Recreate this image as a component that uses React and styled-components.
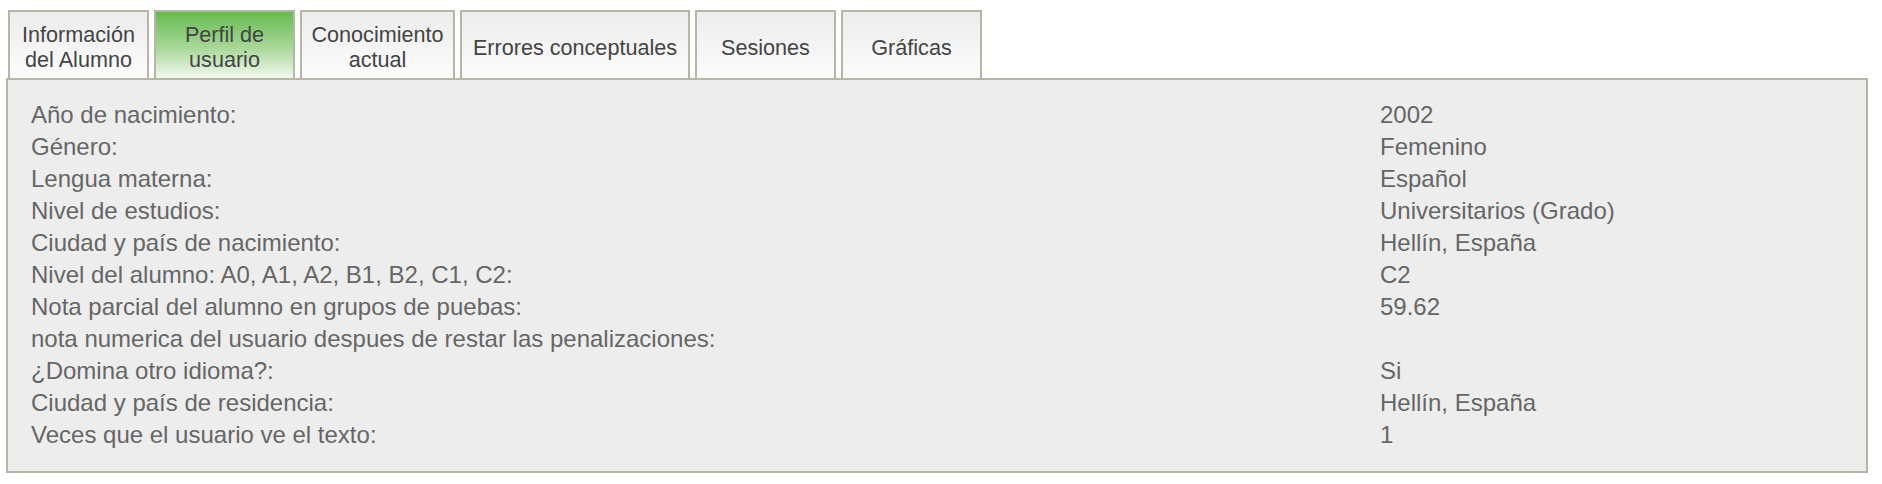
import React from "react";
import styled, { createGlobalStyle } from "styled-components";

const GlobalStyle = createGlobalStyle`
  html, body {
    margin: 0;
    padding: 0;
    background: #ffffff;
  }
  body {
    font-family: "Liberation Sans", Arial, Helvetica, sans-serif;
  }
`;

const tabs = [
  { label: "Información del Alumno", width: 141 },
  { label: "Perfil de usuario", width: 141, active: true },
  { label: "Conocimiento actual", width: 155 },
  { label: "Errores conceptuales", width: 230 },
  { label: "Sesiones", width: 141 },
  { label: "Gráficas", width: 141 },
];

const rows = [
  ["Año de nacimiento:", "2002"],
  ["Género:", "Femenino"],
  ["Lengua materna:", "Español"],
  ["Nivel de estudios:", "Universitarios (Grado)"],
  ["Ciudad y país de nacimiento:", "Hellín, España"],
  ["Nivel del alumno: A0, A1, A2, B1, B2, C1, C2:", "C2"],
  ["Nota parcial del alumno en grupos de puebas:", "59.62"],
  ["nota numerica del usuario despues de restar las penalizaciones:", ""],
  ["¿Domina otro idioma?:", "Si"],
  ["Ciudad y país de residencia:", "Hellín, España"],
  ["Veces que el usuario ve el texto:", "1"],
];

const Page = styled.div`
  padding: 10px 14px 0 6px;
`;

const TabBar = styled.div`
  display: flex;
  gap: 5px;
  margin-left: 2px;
`;

const Tab = styled.div`
  box-sizing: border-box;
  width: ${(p) => p.$width}px;
  height: 68px;
  padding: 4px 4px 0;
  display: flex;
  align-items: center;
  justify-content: center;
  text-align: center;
  border: 2px solid #b7b5a6;
  border-bottom: none;
  background: ${(p) =>
    p.$active
      ? "linear-gradient(to bottom, #66bb4f 0%, #a9d89a 55%, #f1f9ee 100%)"
      : "linear-gradient(to bottom, #ececec 0%, #fcfcfc 100%)"};
  color: #444444;
  font-size: 21.6px;
  line-height: 25px;
  cursor: pointer;
`;

const Panel = styled.div`
  border: 2px solid #b7b5a6;
  background: #ededed;
  padding: 19px 23px 20px;
`;

const InfoGrid = styled.div`
  display: grid;
  grid-template-columns: 1349px 1fr;
  color: #666666;
  font-size: 24px;
  line-height: 32px;
`;

const Label = styled.div`
  white-space: nowrap;
`;

const Value = styled.div`
  white-space: nowrap;
  min-height: 32px;
`;

export default function App() {
  return (
    <Page>
      <GlobalStyle />
      <TabBar>
        {tabs.map((t) => (
          <Tab key={t.label} $width={t.width} $active={t.active}>
            {t.label}
          </Tab>
        ))}
      </TabBar>
      <Panel>
        <InfoGrid>
          {rows.map(([label, value]) => (
            <React.Fragment key={label}>
              <Label>{label}</Label>
              <Value>{value}</Value>
            </React.Fragment>
          ))}
        </InfoGrid>
      </Panel>
    </Page>
  );
}
